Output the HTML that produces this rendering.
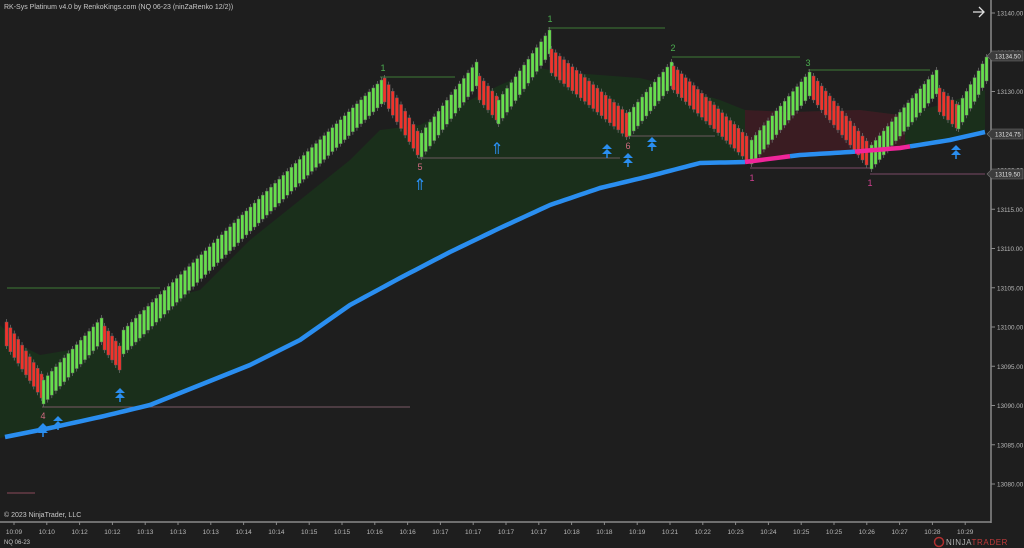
<!DOCTYPE html>
<html><head><meta charset="utf-8"><style>
html,body{margin:0;padding:0;background:#1e1e1e;width:1024px;height:548px;overflow:hidden}
svg{display:block;font-family:"Liberation Sans",sans-serif}
</style></head><body>
<svg id="s" width="1024" height="548" viewBox="0 0 1024 548" xmlns="http://www.w3.org/2000/svg">
<rect width="1024" height="548" fill="#1e1e1e"/>
<g id="bg"></g>
<g id="lines"></g>
<g id="bars"></g>
<g id="blue"></g>
<g id="marks"></g>
<g id="axis"></g>
<text x="4" y="9" fill="#c8c8c8" font-size="7">RK-Sys Platinum v4.0 by RenkoKings.com (NQ 06-23 (ninZaRenko 12/2))</text>
<text x="4" y="517" fill="#c8c8c8" font-size="7">© 2023 NinjaTrader, LLC</text>
<text x="4" y="544" fill="#c8c8c8" font-size="6">NQ 06-23</text>
<path d="M973,12 L984,12 M979,7 L984,12 L979,17" fill="none" stroke="#e0e0e0" stroke-width="1.3"/>
<circle cx="939" cy="542" r="4.5" fill="none" stroke="#b03030" stroke-width="1.5"/>
<text x="946" y="545" font-size="8" letter-spacing="0.6"><tspan fill="#b0b0b0">NINJA</tspan><tspan fill="#c03a3a">TRADER</tspan></text>
</svg>
<script>
(function(){
var NS="http://www.w3.org/2000/svg";
function el(p,t,a,txt){var e=document.createElementNS(NS,t);for(var k in a)e.setAttribute(k,a[k]);if(txt!==undefined)e.textContent=txt;document.getElementById(p).appendChild(e);return e;}
var blueP=[[5,437],[50,428],[100,417],[150,405],[200,385],[250,365],[300,340],[350,305],[400,278],[450,252],[500,228],[550,205],[600,188],[650,176],[700,163],[745,162],[800,155],[850,152],[900,148],[950,140],[985,132]];
var topP=[[0,325],[20,345],[40,355],[100,345],[130,340],[160,300],[200,290],[250,240],[300,200],[350,160],[380,130],[420,125],[470,100],[500,85],[540,68],[560,72],[600,75],[640,78],[680,88],[720,100],[745,110],[790,112],[860,110],[900,115],[940,105],[985,90]];
function interp(pts,x){for(var i=0;i<pts.length-1;i++){if(x>=pts[i][0]&&x<=pts[i+1][0]){var t=(x-pts[i][0])/(pts[i+1][0]-pts[i][0]);return pts[i][1]+t*(pts[i+1][1]-pts[i][1]);}}return x<pts[0][0]?pts[0][1]:pts[pts.length-1][1];}
var poly=topP.map(function(p){return p.join(",");}).join(" ");
var bl=[[985,132]].concat(blueP.slice().reverse(),[[0,438]]);
el("bg","polygon",{points:poly+" "+bl.map(function(p){return p.join(",");}).join(" "),fill:"#1a2f1b"});
var mp=[],x;for(x=745;x<=905;x+=5)mp.push([x,interp(topP,x)]);
for(x=905;x>=745;x-=5)mp.push([x,interp(blueP,x)]);
el("bg","polygon",{points:mp.map(function(p){return p.join(",");}).join(" "),fill:"#3a1c22"});
var hl=[[380,77,455,77,"#3f7a35"],[548,28,665,28,"#3f7a35"],[672,57,800,57,"#3f7a35"],[808,70,930,70,"#3f7a35"],[7,288,160,288,"#3f7a35"],[418,158,620,158,"#6a5a5e"],[628,136,715,136,"#6a5a5e"],[42,407,410,407,"#7a5a65"],[750,168,870,168,"#7a4a66"],[870,174,985,174,"#7a4a66"],[7,493,35,493,"#8a4a5a"]];
hl.forEach(function(h){el("lines","line",{x1:h[0],y1:h[1],x2:h[2],y2:h[3],stroke:h[4],"stroke-width":1});});
var seg=[[5,346,40,398,0],[42,380,100,318,1],[103,350,118,370,0],[122,330,380,80,1],[383,102,416,155,0],[420,133,475,62,1],[478,100,495,120,0],[497,100,548,30,1],[550,73,625,137,0],[628,112,670,62,1],[672,90,745,160,0],[750,140,808,72,1],[812,100,865,165,0],[870,145,935,70,1],[938,112,955,128,0],[957,105,985,57,1]];
var H=24;
seg.forEach(function(s){var n=Math.max(1,Math.round((s[2]-s[0])/4.1));for(var i=0;i<=n;i++){var bx=s[0]+(s[2]-s[0])*i/n;var c=s[1]+(s[3]-s[1])*i/n;var y0,y1;if(s[4]){y0=c;y1=c+H;}else{y0=c-H;y1=c;}
el("bars","line",{x1:bx+1.5,y1:y0-3,x2:bx+1.5,y2:y1+3,stroke:"#6a6a6a","stroke-width":0.8});
el("bars","rect",{x:bx,y:y0,width:3.1,height:H,fill:s[4]?"#66e04c":"#f2322a",stroke:"#5a5a5a","stroke-width":0.45});}});
function pl(pts,c){el("blue","polyline",{points:pts.map(function(p){return p.join(",");}).join(" "),fill:"none",stroke:c,"stroke-width":4.5,"stroke-linejoin":"round"});}
function part(a,b){var r=[];for(var xx=a;xx<=b;xx+=5)r.push([xx,interp(blueP,xx)]);return r;}
pl(part(5,745),"#2a8ef0");pl(part(745,790),"#f0259a");pl(part(790,855),"#2a8ef0");pl(part(855,910),"#f0259a");pl(part(910,985),"#2a8ef0");
[[383,71,"1","#4caf50"],[550,22,"1","#4caf50"],[673,51,"2","#4caf50"],[808,66,"3","#4caf50"],[420,170,"5","#d06a80"],[628,149,"6","#d06a80"],[43,419,"4","#d06a80"],[752,181,"1","#d04090"],[870,186,"1","#d04090"]].forEach(function(l){el("marks","text",{x:l[0],y:l[1],fill:l[3],"font-size":9,"text-anchor":"middle"},l[2]);});
[[43,432],[58,425],[120,397],[607,153],[628,162],[652,146],[956,154]].forEach(function(a){var ax=a[0],ay=a[1];
el("marks","path",{d:"M"+(ax-5)+","+(ay-4)+" L"+ax+","+(ay-9)+" L"+(ax+5)+","+(ay-4)+" Z M"+(ax-5)+","+(ay+1)+" L"+ax+","+(ay-4)+" L"+(ax+5)+","+(ay+1)+" Z",fill:"#2a8ef0"});
el("marks","line",{x1:ax,y1:ay,x2:ax,y2:ay+5,stroke:"#2a8ef0","stroke-width":1.5});});
[[420,190],[497,154]].forEach(function(a){el("marks","text",{x:a[0],y:a[1],fill:"#2a8ef0","font-size":16,"text-anchor":"middle","font-family":"DejaVu Sans"},"⇑");});
el("axis","line",{x1:991,y1:0,x2:991,y2:523,stroke:"#8a8a8a","stroke-width":1.5});
el("axis","line",{x1:0,y1:522,x2:991,y2:522,stroke:"#8a8a8a","stroke-width":1.5});
for(var i=0;i<=12;i++){var p=13140-i*5;var y=13+(13140-p)*7.85;el("axis","line",{x1:991,y1:y,x2:995,y2:y,stroke:"#8a8a8a"});el("axis","text",{x:997,y:y+2.5,fill:"#b8b8b8","font-size":6.3},p.toFixed(2));}
var tl="10:09 10:10 10:12 10:12 10:13 10:13 10:13 10:14 10:14 10:15 10:15 10:16 10:16 10:17 10:17 10:17 10:17 10:18 10:18 10:19 10:21 10:22 10:23 10:24 10:25 10:25 10:26 10:27 10:28 10:29".split(" ");
tl.forEach(function(t,i){var tx=14+i*32.8;el("axis","line",{x1:tx,y1:522,x2:tx,y2:525,stroke:"#8a8a8a"});el("axis","text",{x:tx,y:534,fill:"#b8b8b8","font-size":6.5,"text-anchor":"middle"},t);});
[[56,"13134.50"],[134,"13124.75"],[174,"13119.50"]].forEach(function(t){var ty=t[0];el("axis","path",{d:"M987,"+ty+" L992,"+(ty-5)+" L1023,"+(ty-5)+" L1023,"+(ty+5)+" L992,"+(ty+5)+" Z",fill:"#3c3c3c",stroke:"#777","stroke-width":0.6});el("axis","text",{x:995,y:ty+2.3,fill:"#e0e0e0","font-size":6.2},t[1]);});
})();
</script>
</body></html>
